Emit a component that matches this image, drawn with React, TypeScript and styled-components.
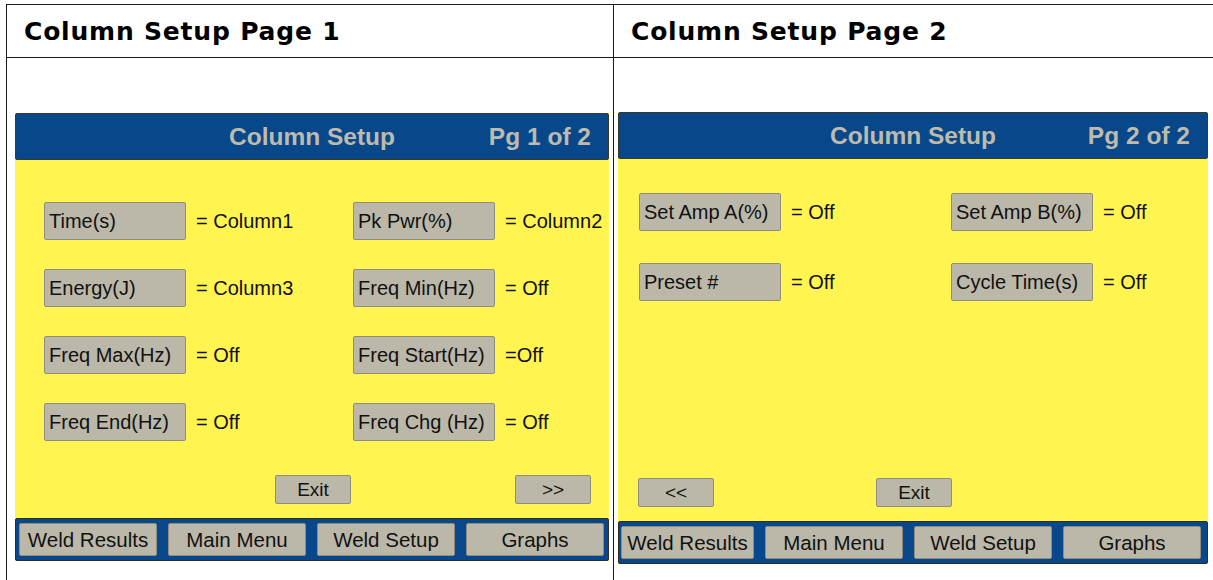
import React from 'react';
import styled, { createGlobalStyle } from 'styled-components';

type Field = [string, string];

type ScreenProps = {
  page: number;
  height: number;
  fields: Array<Field>;
  fieldsTop: number;
  rowGap: number;
  padLeft: number;
  colWidth: number;
  navCols: string;
  navPadLeft: number;
  back?: boolean;
  forward?: boolean;
};

const page1Fields: Array<Field> = [
  ['Time(s)', '= Column1'],
  ['Pk Pwr(%)', '= Column2'],
  ['Energy(J)', '= Column3'],
  ['Freq Min(Hz)', '= Off'],
  ['Freq Max(Hz)', '= Off'],
  ['Freq Start(Hz)', '=Off'],
  ['Freq End(Hz)', '= Off'],
  ['Freq Chg (Hz)', '= Off'],
];

const page2Fields: Array<Field> = [
  ['Set Amp A(%)', '= Off'],
  ['Set Amp B(%)', '= Off'],
  ['Preset #', '= Off'],
  ['Cycle Time(s)', '= Off'],
];

const navItems = ['Weld Results', 'Main Menu', 'Weld Setup', 'Graphs'];

function Screen({
  page,
  height,
  fields,
  fieldsTop,
  rowGap,
  padLeft,
  colWidth,
  navCols,
  navPadLeft,
  back,
  forward,
}: ScreenProps) {
  return (
    <ScreenFrame $height={height}>
      <TopBar>
        <span />
        <TopTitle>Column Setup</TopTitle>
        <PageTag>Pg {page} of 2</PageTag>
      </TopBar>
      <Body>
        <FieldGrid
          $top={fieldsTop}
          $gap={rowGap}
          $padLeft={padLeft}
          $colWidth={colWidth}
        >
          {fields.map(([label, value]) => (
            <FieldRow key={label}>
              <FieldBox>{label}</FieldBox>
              <FieldValue>{value}</FieldValue>
            </FieldRow>
          ))}
        </FieldGrid>
        <ActionRow>
          <div>{back && <SmallButton>&lt;&lt;</SmallButton>}</div>
          <SmallButton>Exit</SmallButton>
          <ActionEnd>{forward && <SmallButton>&gt;&gt;</SmallButton>}</ActionEnd>
        </ActionRow>
      </Body>
      <NavBar $cols={navCols} $padLeft={navPadLeft}>
        {navItems.map((n) => (
          <NavButton key={n}>{n}</NavButton>
        ))}
      </NavBar>
    </ScreenFrame>
  );
}

export default function App() {
  return (
    <>
      <GlobalStyle />
      <Sheet>
        <TitleCell>Column Setup Page 1</TitleCell>
        <TitleCell>Column Setup Page 2</TitleCell>
        <ContentCell $top={55} $left={8} $right={4}>
          <Screen
            page={1}
            height={448}
            fields={page1Fields}
            fieldsTop={42}
            rowGap={29}
            padLeft={29}
            colWidth={309}
            navCols="repeat(4, 1fr)"
            navPadLeft={3}
            forward
          />
        </ContentCell>
        <ContentCell $top={54} $left={4} $right={12}>
          <Screen
            page={2}
            height={452}
            fields={page2Fields}
            fieldsTop={34}
            rowGap={32}
            padLeft={21}
            colWidth={312}
            navCols="133px repeat(3, 138px)"
            navPadLeft={2}
            back
          />
        </ContentCell>
      </Sheet>
    </>
  );
}

const GlobalStyle = createGlobalStyle`
  body {
    margin: 0;
    background: #ffffff;
    overflow: hidden;
    font-family: "Liberation Sans", Arial, sans-serif;
  }
`;

const Sheet = styled.div`
  display: grid;
  grid-template-columns: 607px 607px;
  margin: 4px 0 0 6px;
  border-top: 1px solid #1a1a1a;
  border-left: 1px solid #1a1a1a;
`;

const TitleCell = styled.div`
  height: 52px;
  display: flex;
  align-items: center;
  padding-left: 17px;
  border-right: 1px solid #1a1a1a;
  border-bottom: 1px solid #1a1a1a;
  font-family: "DejaVu Sans", Verdana, sans-serif;
  font-weight: 700;
  font-size: 25px;
  letter-spacing: 0.8px;
  color: #000;
`;

const ContentCell = styled.div<{ $top: number; $left: number; $right: number }>`
  padding: ${(p) => p.$top}px ${(p) => p.$right}px 60px ${(p) => p.$left}px;
  border-right: 1px solid #1a1a1a;
  border-bottom: 1px solid #1a1a1a;
`;

const ScreenFrame = styled.div<{ $height: number }>`
  display: flex;
  flex-direction: column;
  height: ${(p) => p.$height}px;
  background: #fff450;
`;

const TopBar = styled.div`
  display: grid;
  grid-template-columns: 1fr auto 1fr;
  align-items: center;
  height: 45px;
  background: #08488a;
  border: 1px solid #3a3a2c;
  border-radius: 2px;
  color: #bdbbad;
  font-weight: 700;
  font-size: 24.5px;
`;

const TopTitle = styled.span``;

const PageTag = styled.span`
  justify-self: end;
  padding-right: 17px;
`;

const Body = styled.div`
  flex: 1;
  display: flex;
  flex-direction: column;
`;

const FieldGrid = styled.div<{
  $top: number;
  $gap: number;
  $padLeft: number;
  $colWidth: number;
}>`
  display: grid;
  grid-template-columns: ${(p) => p.$colWidth}px 1fr;
  row-gap: ${(p) => p.$gap}px;
  padding: ${(p) => p.$top}px 0 0 ${(p) => p.$padLeft}px;
`;

const FieldRow = styled.div`
  display: flex;
  align-items: center;
`;

const FieldBox = styled.div`
  width: 142px;
  height: 38px;
  box-sizing: border-box;
  display: flex;
  align-items: center;
  padding-left: 4px;
  background: #bbb8a9;
  border: 1px solid #8f8d80;
  border-radius: 2px;
  font-size: 20px;
  color: #111;
  white-space: nowrap;
`;

const FieldValue = styled.span`
  margin-left: 10px;
  font-size: 20px;
  color: #111;
  white-space: nowrap;
`;

const ActionRow = styled.div`
  margin-top: auto;
  display: grid;
  grid-template-columns: 1fr auto 1fr;
  align-items: end;
  padding: 0 18px 14px 20px;
`;

const ActionEnd = styled.div`
  display: flex;
  justify-content: flex-end;
`;

const SmallButton = styled.div`
  width: 76px;
  height: 29px;
  box-sizing: border-box;
  display: flex;
  align-items: center;
  justify-content: center;
  background: #bbb8a9;
  border: 1px solid #8f8d80;
  border-radius: 2px;
  font-size: 19px;
  color: #111;
`;

const NavBar = styled.div<{ $cols: string; $padLeft: number }>`
  display: grid;
  grid-template-columns: ${(p) => p.$cols};
  column-gap: 11px;
  height: 43px;
  box-sizing: border-box;
  padding: 4px 4px 4px ${(p) => p.$padLeft}px;
  background: #08488a;
  border: 1px solid #2d2d22;
  border-radius: 2px;
  overflow: hidden;
`;

const NavButton = styled.div`
  display: flex;
  align-items: center;
  justify-content: center;
  background: #bbb8a9;
  border: 1px solid #8f8d80;
  border-radius: 2px;
  font-size: 20.5px;
  color: #111;
  white-space: nowrap;
`;
